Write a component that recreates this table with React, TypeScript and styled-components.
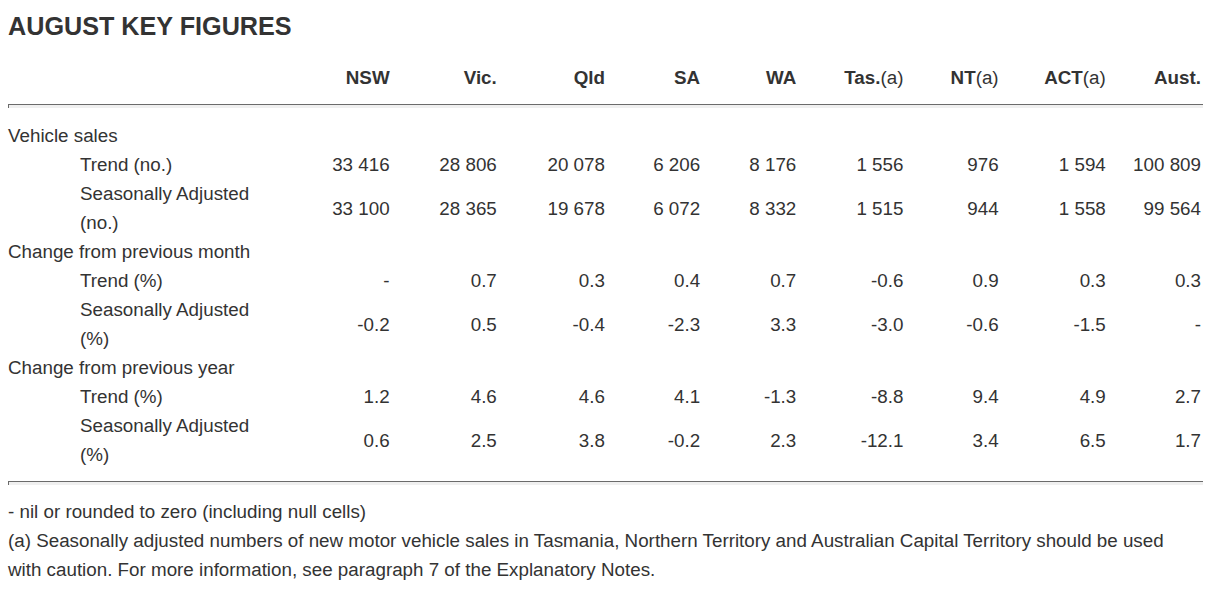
import styled, { createGlobalStyle } from 'styled-components';

const GlobalStyle = createGlobalStyle`
  html, body {
    margin: 0;
    padding: 0;
    background: #fff;
  }
  body {
    font-family: 'Liberation Sans', Arial, sans-serif;
    color: #333;
  }
`;

interface IRow {
  label: string;
  values?: string[];
  indent?: boolean;
}

const COLUMNS = [
  { name: 'NSW' },
  { name: 'Vic.' },
  { name: 'Qld' },
  { name: 'SA' },
  { name: 'WA' },
  { name: 'Tas.', note: '(a)' },
  { name: 'NT', note: '(a)' },
  { name: 'ACT', note: '(a)' },
  { name: 'Aust.' },
];

const COL_WIDTHS = [276, 107, 107, 108, 95, 96, 107, 95, 107, 95];

const ROWS: IRow[] = [
  { label: 'Vehicle sales' },
  {
    label: 'Trend (no.)',
    indent: true,
    values: ['33 416', '28 806', '20 078', '6 206', '8 176', '1 556', '976', '1 594', '100 809'],
  },
  {
    label: 'Seasonally Adjusted (no.)',
    indent: true,
    values: ['33 100', '28 365', '19 678', '6 072', '8 332', '1 515', '944', '1 558', '99 564'],
  },
  { label: 'Change from previous month' },
  {
    label: 'Trend (%)',
    indent: true,
    values: ['-', '0.7', '0.3', '0.4', '0.7', '-0.6', '0.9', '0.3', '0.3'],
  },
  {
    label: 'Seasonally Adjusted (%)',
    indent: true,
    values: ['-0.2', '0.5', '-0.4', '-2.3', '3.3', '-3.0', '-0.6', '-1.5', '-'],
  },
  { label: 'Change from previous year' },
  {
    label: 'Trend (%)',
    indent: true,
    values: ['1.2', '4.6', '4.6', '4.1', '-1.3', '-8.8', '9.4', '4.9', '2.7'],
  },
  {
    label: 'Seasonally Adjusted (%)',
    indent: true,
    values: ['0.6', '2.5', '3.8', '-0.2', '2.3', '-12.1', '3.4', '6.5', '1.7'],
  },
];

const App = () => {
  return (
    <Page>
      <GlobalStyle />
      <Title>AUGUST KEY FIGURES</Title>
      <Table>
        <colgroup>
          {COL_WIDTHS.map((w, i) => (
            <col key={i} style={{ width: w }} />
          ))}
        </colgroup>
        <thead>
          <tr>
            <HeadCell />
            {COLUMNS.map((c) => (
              <HeadCell key={c.name}>
                <strong>{c.name}</strong>
                {c.note}
              </HeadCell>
            ))}
          </tr>
        </thead>
        <tbody>
          <tr>
            <RuleCell colSpan={10}>
              <Rule />
            </RuleCell>
          </tr>
          {ROWS.map((row, i) => (
            <tr key={i}>
              <LabelCell indent={!!row.indent}>{row.label}</LabelCell>
              {row.values
                ? row.values.map((v, j) => <ValueCell key={j}>{v}</ValueCell>)
                : COLUMNS.map((c) => <ValueCell key={c.name} />)}
            </tr>
          ))}
          <tr>
            <RuleCell colSpan={10} bottom>
              <Rule />
            </RuleCell>
          </tr>
        </tbody>
      </Table>
      <Notes>
        <p>- nil or rounded to zero (including null cells)</p>
        <p>
          (a) Seasonally adjusted numbers of new motor vehicle sales in Tasmania, Northern Territory and
          Australian Capital Territory should be used with caution. For more information, see paragraph 7
          of the Explanatory Notes.
        </p>
      </Notes>
    </Page>
  );
};

const Page = styled.div`
  width: 1194px;
  padding: 0 8px;
  font-size: 18.8px;
  line-height: 29px;
`;

const Title = styled.h2`
  margin: 0;
  padding-top: 11px;
  font-size: 25.2px;
  line-height: 30px;
  font-weight: 700;
  color: #333;
`;

const Table = styled.table`
  width: 1195px;
  table-layout: fixed;
  border-collapse: collapse;
  margin-top: 22px;
`;

const HeadCell = styled.th`
  padding: 0 2px 12px 0;
  text-align: right;
  font-weight: 400;
  strong {
    font-weight: 700;
  }
`;

const RuleCell = styled.td<{ bottom?: boolean }>`
  padding: ${({ bottom }) => (bottom ? '12px 0 12px' : '0 0 13px')};
`;

const Rule = styled.div`
  height: 3px;
  border-top: 1px solid #6b6b6b;
  border-left: 1px solid #6b6b6b;
  background: #f0f0f0;
`;

const LabelCell = styled.td<{ indent: boolean }>`
  padding: 0 20px 0 ${({ indent }) => (indent ? '72px' : '0')};
  text-align: left;
  vertical-align: top;
`;

const ValueCell = styled.td`
  padding: 0 2px 0 0;
  text-align: right;
  vertical-align: middle;
  white-space: nowrap;
`;

const Notes = styled.div`
  p {
    margin: 0;
  }
`;

export default App;
